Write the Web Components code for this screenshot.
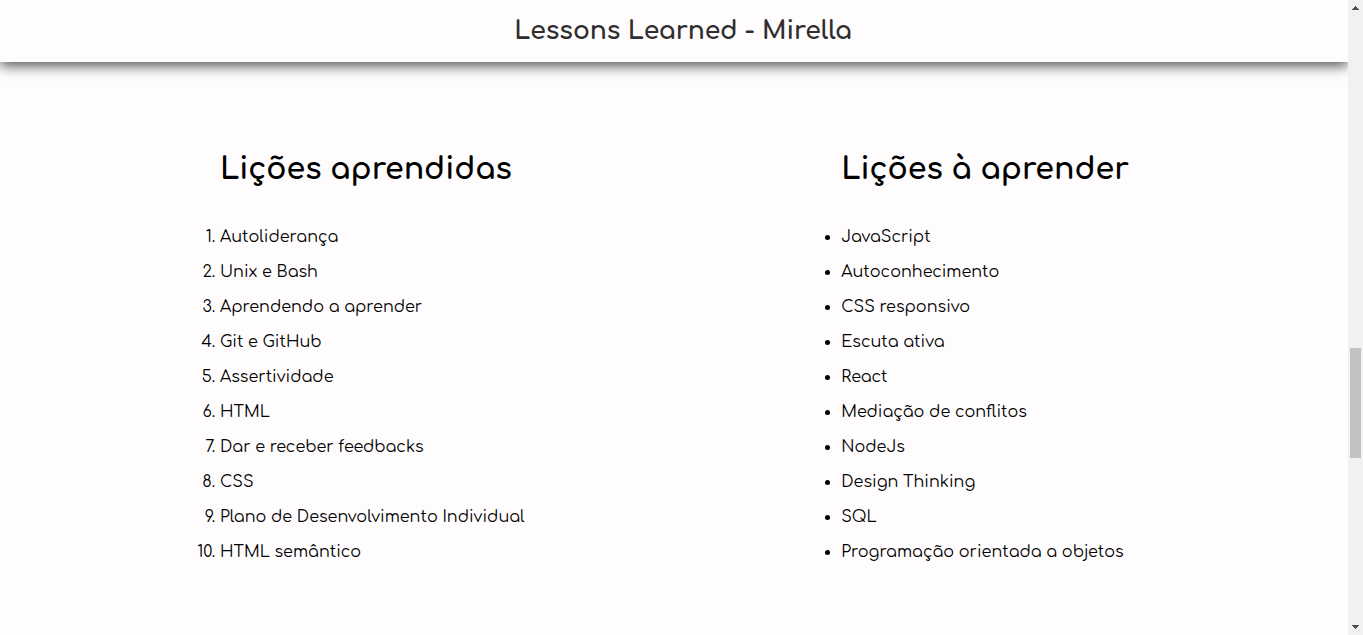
<!DOCTYPE html>
<html lang="pt-BR">
<head>
<meta charset="utf-8">
<meta name="viewport" content="width=device-width, initial-scale=1">
<title>Lessons Learned - Mirella</title>
<style>
body { margin: 0; background: #fffcfd; color: #000; font: 16px/20px Comfortaa, Inter, "Open Sans", sans-serif; }
</style>
</head>
<body>
<lessons-page>
  <page-header slot="header">Lessons Learned - Mirella</page-header>
  <lesson-list kind="ol" heading="Lições aprendidas" items="Autoliderança|Unix e Bash|Aprendendo a aprender|Git e GitHub|Assertividade|HTML|Dar e receber feedbacks|CSS|Plano de Desenvolvimento Individual|HTML semântico"></lesson-list>
  <lesson-list kind="ul" heading="Lições à aprender" items="JavaScript|Autoconhecimento|CSS responsivo|Escuta ativa|React|Mediação de conflitos|NodeJs|Design Thinking|SQL|Programação orientada a objetos"></lesson-list>
</lessons-page>
<script>
class LessonsPage extends HTMLElement {
  constructor() {
    super();
    this.attachShadow({ mode: 'open' }).innerHTML = `
      <style>
        :host { display: flex; min-height: 100vh; }
        .view { flex: 1; min-width: 0; overflow: hidden; }
        main { display: grid; grid-template-columns: 25fr 22fr; padding: 86px 0 60px 180px; }
      </style>
      <div class="view">
        <slot name="header"></slot>
        <main><slot></slot></main>
      </div>
      <scroll-rail></scroll-rail>`;
  }
}
class PageHeader extends HTMLElement {
  constructor() {
    super();
    this.attachShadow({ mode: 'open' }).innerHTML = `
      <style>
        :host { display: block; }
        header { padding: 13px 0 13px 18px; background: #fffcfd; box-shadow: 0 4px 12px #000a; }
        h1 { margin: 0; color: #302e2f; font-size: 25px; line-height: 36px; font-weight: 700; text-align: center; }
      </style>
      <header><h1><slot></slot></h1></header>`;
  }
}
class LessonList extends HTMLElement {
  connectedCallback() {
    const root = this.attachShadow({ mode: 'open' });
    root.innerHTML = `
      <style>
        :host { display: block; min-width: 0; }
        h2 { margin: 0 0 35px; padding-left: 40px; font-size: 30px; line-height: 44px; font-weight: 700; }
        ol, ul { margin: 0; padding-left: 40px; }
        li { margin-bottom: 15px; }
      </style>
      <section><h2></h2></section>`;
    root.querySelector('h2').textContent = this.getAttribute('heading');
    const list = document.createElement(this.getAttribute('kind'));
    for (const text of this.getAttribute('items').split('|')) {
      const item = document.createElement('li');
      item.textContent = text;
      list.append(item);
    }
    root.querySelector('section').append(list);
  }
}
class ScrollRail extends HTMLElement {
  constructor() {
    super();
    this.attachShadow({ mode: 'open' }).innerHTML = `
      <style>
        :host { display: grid; grid-template-rows: 15px 333fr 110fr 162fr 15px; flex: 0 0 15px; height: 100vh; position: sticky; top: 0; background: #f1f1f1; }
        svg { display: block; width: 15px; height: 15px; fill: #505050; }
        .thumb { grid-row: 3; margin: 0 2px; background: #c1c1c1; }
        .down { grid-row: 5; }
      </style>
      <svg viewBox="0 0 15 15" aria-hidden="true"><path d="M4 10V9h1V8h1V7h1V6h1v1h1v1h1v1h1v1z"/></svg>
      <div class="thumb"></div>
      <svg class="down" viewBox="0 0 15 15" aria-hidden="true"><path d="M4 5h7v1h-1v1H9v1H8v1H7V8H6V7H5V6H4z"/></svg>`;
  }
}
customElements.define('scroll-rail', ScrollRail);
customElements.define('page-header', PageHeader);
customElements.define('lesson-list', LessonList);
customElements.define('lessons-page', LessonsPage);
</script>
</body>
</html>
